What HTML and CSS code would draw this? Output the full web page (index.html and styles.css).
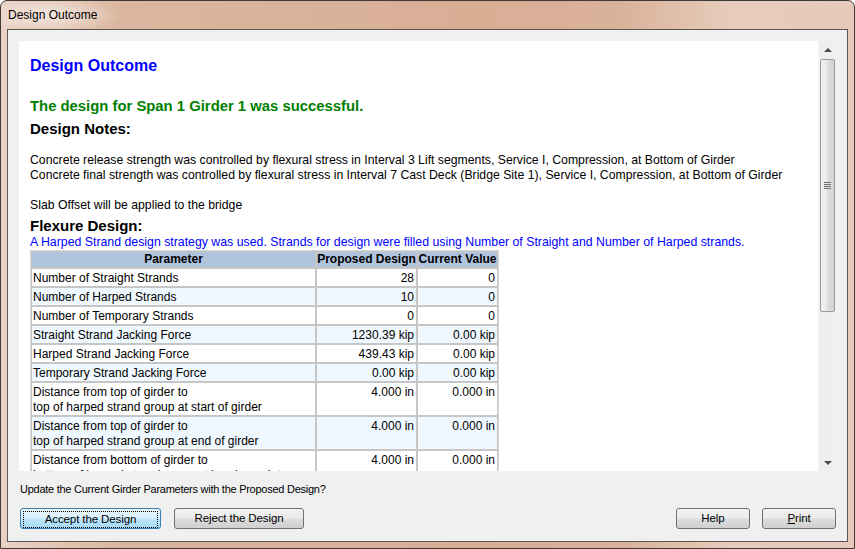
FILE: index.html
```html
<!DOCTYPE html>
<html>
<head>
<meta charset="utf-8">
<link rel="stylesheet" href="styles.css">
</head>
<body>
<div class="window">
  <div class="titlebar"><span class="title">Design Outcome</span></div>
  <div class="client">
    <div class="view">
      <div class="page">
        <div class="h1">Design Outcome</div>
        <div class="success">The design for Span 1 Girder 1 was successful.</div>
        <div class="h2 notes-head">Design Notes:</div>
        <div class="notes">
          <div>Concrete release strength was controlled by flexural stress in Interval 3 Lift segments, Service I, Compression, at Bottom of Girder</div>
          <div>Concrete final strength was controlled by flexural stress in Interval 7 Cast Deck (Bridge Site 1), Service I, Compression, at Bottom of Girder</div>
          <div>&nbsp;</div>
          <div>Slab Offset will be applied to the bridge</div>
        </div>
        <div class="h2">Flexure Design:</div>
        <div class="strategy">A Harped Strand design strategy was used. Strands for design were filled using Number of Straight and Number of Harped strands.</div>
        <table class="grid">
          <tr class="head"><th class="c1">Parameter</th><th class="c2">Proposed Design</th><th class="c3">Current Value</th></tr>
          <tr><td>Number of Straight Strands</td><td class="num">28</td><td class="num">0</td></tr>
          <tr class="alt"><td>Number of Harped Strands</td><td class="num">10</td><td class="num">0</td></tr>
          <tr><td>Number of Temporary Strands</td><td class="num">0</td><td class="num">0</td></tr>
          <tr class="alt"><td>Straight Strand Jacking Force</td><td class="num">1230.39 kip</td><td class="num">0.00 kip</td></tr>
          <tr><td>Harped Strand Jacking Force</td><td class="num">439.43 kip</td><td class="num">0.00 kip</td></tr>
          <tr class="alt"><td>Temporary Strand Jacking Force</td><td class="num">0.00 kip</td><td class="num">0.00 kip</td></tr>
          <tr><td>Distance from top of girder to<br>top of harped strand group at start of girder</td><td class="num">4.000 in</td><td class="num">0.000 in</td></tr>
          <tr class="alt"><td>Distance from top of girder to<br>top of harped strand group at end of girder</td><td class="num">4.000 in</td><td class="num">0.000 in</td></tr>
          <tr><td>Distance from bottom of girder to<br>bottom of harped strand group at harping point</td><td class="num">4.000 in</td><td class="num">0.000 in</td></tr>
        </table>
      </div>
      <div class="scrollbar">
        <div class="sb-btn"><span class="arrow-up"></span></div>
        <div class="sb-thumb"><span class="grip"></span></div>
        <div class="sb-track"></div>
        <div class="sb-btn"><span class="arrow-down"></span></div>
      </div>
    </div>
    <div class="prompt">Update the Current Girder Parameters with the Proposed Design?</div>
    <div class="buttons">
      <button class="btn default accept"><span class="focus">Accept the Design</span></button>
      <button class="btn reject">Reject the Design</button>
      <button class="btn small help">Help</button>
      <button class="btn small"><u>P</u>rint</button>
    </div>
  </div>
</div>
</body>
</html>
```

FILE: styles.css
```css
html, body {
  margin: 0;
  padding: 0;
  width: 855px;
  height: 549px;
  overflow: hidden;
  background: #ffffff;
}

.window {
  box-sizing: border-box;
  width: 855px;
  height: 549px;
  border: 1px solid #3e3a38;
  border-radius: 7px 7px 0 0;
  background: linear-gradient(90deg, #e9d3c6 0%, #dbb69e 14%, #d8ae95 55%, #d9b198 72%, #e7ccbc 86%, #e5cabb 100%);
  display: flex;
  flex-direction: column;
  font-family: "Liberation Sans", Arial, sans-serif;
}

.titlebar {
  height: 28px;
  line-height: 28px;
  padding-left: 7px;
  font-size: 12px;
  color: #000;
  background: radial-gradient(ellipse 70px 18px at 52px 14px, rgba(255,255,255,0.55), rgba(255,255,255,0) 100%);
}

.client {
  flex: 1;
  margin: 0 6px 6px 6px;
  border: 1px solid #5d5752;
  background: #f0f0f0;
  padding: 11px 11px 0 11px;
  display: flex;
  flex-direction: column;
}

.view {
  height: 430px;
  display: flex;
  background: #ffffff;
  overflow: hidden;
}

.page {
  flex: 1;
  padding: 15px 0 0 11px;
  overflow: hidden;
  color: #000;
  font-size: 12px;
}

.h1 {
  font-size: 16px;
  font-weight: bold;
  color: #0000ff;
  line-height: 20px;
}

.success {
  margin-top: 21px;
  font-size: 14.85px;
  font-weight: bold;
  color: #008000;
  line-height: 18px;
}

.h2 {
  font-size: 15px;
  font-weight: bold;
  line-height: 18px;
}

.notes-head {
  margin-top: 5px;
}

.notes {
  margin-top: 15px;
  margin-bottom: 4px;
  line-height: 15px;
  font-size: 12.26px;
}

.strategy {
  color: #0000ff;
  line-height: 15px;
  font-size: 12.32px;
}

.grid {
  border-collapse: separate;
  border-spacing: 0;
  border: 1px solid #d6d6d6;
  font-size: 12px;
}

.grid th, .grid td {
  border: 1px solid #c6c6c6;
  vertical-align: top;
}

.grid th {
  background: #b0c4de;
  font-weight: bold;
  line-height: 15px;
  padding: 0;
  text-align: center;
}

.grid td {
  line-height: 15px;
  padding: 2px 2px 0 1px;
  white-space: nowrap;
}

.grid .c1 { width: 283px; }
.grid .c2 { width: 99px; }
.grid .c3 { width: 79px; }

.grid td.num { text-align: right; }

.grid tr.alt td { background: #f0f8ff; }

.scrollbar {
  width: 17px;
  display: flex;
  flex-direction: column;
  background: #efefef;
  border-left: 1px solid #f6f6f6;
}

.sb-btn {
  height: 17px;
  display: flex;
  align-items: center;
  justify-content: center;
}

.arrow-up, .arrow-down {
  width: 0;
  height: 0;
  border-left: 4px solid transparent;
  border-right: 4px solid transparent;
}

.arrow-up { border-bottom: 4px solid #4a4a4a; }
.arrow-down { border-top: 4px solid #4a4a4a; }

.sb-thumb {
  height: 251px;
  margin: 1px 1px 0 1px;
  border: 1px solid #9b9b9b;
  border-radius: 2px;
  background: linear-gradient(90deg, #f3f3f3 0%, #e9e9e9 45%, #dcdcdc 55%, #d3d3d3 100%);
  display: flex;
  align-items: center;
  justify-content: center;
}

.grip {
  width: 7px;
  height: 7px;
  background: repeating-linear-gradient(180deg, #6f6f6f 0px, #6f6f6f 1px, #e6e6e6 1px, #e6e6e6 2px);
}

.sb-track {
  flex: 1;
}

.prompt {
  margin-top: 11px;
  padding-left: 1px;
  font-size: 11px;
  letter-spacing: -0.26px;
  line-height: 14px;
  color: #000;
}

.buttons {
  margin-top: 12px;
  padding-left: 1px;
  display: flex;
  gap: 13px;
}

.btn {
  box-sizing: border-box;
  height: 21px;
  border: 1px solid #707070;
  border-radius: 3px;
  background: linear-gradient(180deg, #f2f2f2 0%, #ebebeb 48%, #dddddd 52%, #cfcfcf 100%);
  font-family: "Liberation Sans", Arial, sans-serif;
  font-size: 11.5px;
  letter-spacing: -0.1px;
  color: #000;
  padding: 0;
  margin: 0;
  line-height: 17px;
}

.accept { width: 141px; }
.reject { width: 130px; }
.small { width: 74px; }
.help { margin-left: auto; margin-right: -1px; }

.btn.default {
  border-color: #3c7fb1;
  background: linear-gradient(180deg, #eaf6fd 0%, #d9f0fc 48%, #bee6fd 52%, #a7d9f5 100%);
  padding: 2px;
}

.focus {
  display: block;
  height: 15px;
  line-height: 14px;
  border: 1px dotted #000;
}
```
